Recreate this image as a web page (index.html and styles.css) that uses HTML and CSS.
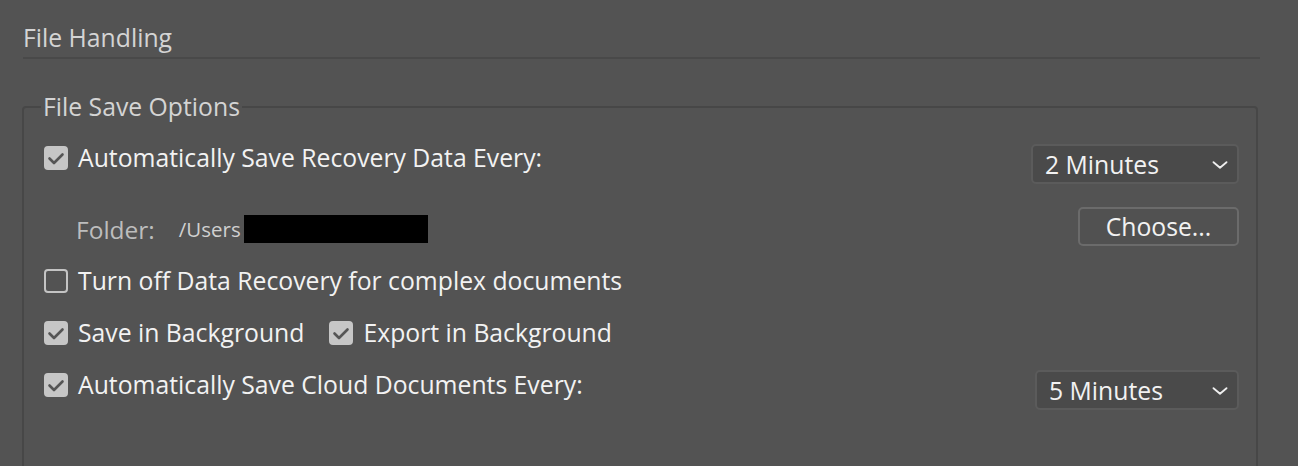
FILE: index.html
```html
<!DOCTYPE html>
<html>
<head>
<meta charset="utf-8">
<link rel="stylesheet" href="styles.css">
</head>
<body>
<div class="window">
  <div class="page">
    <h1 class="section-title">File Handling</h1>
    <fieldset class="group">
      <legend class="group-title">File Save Options</legend>
      <div class="row row-first">
        <label class="check"><span class="box on"><svg viewBox="0 0 24 24" width="24" height="24"><path d="M5.5 12.5 L10 17 L18.5 8.5" fill="none" stroke="#555" stroke-width="2.6" stroke-linecap="round" stroke-linejoin="round"/></svg></span>Automatically Save Recovery Data Every:</label>
        <div class="select select-a"><span>2 Minutes</span><svg class="chev" viewBox="0 0 16 8" width="16" height="8"><path d="M1.5 1.2 L8 6.8 L14.5 1.2" fill="none" stroke="#eee" stroke-width="1.8" stroke-linecap="round" stroke-linejoin="round"/></svg></div>
      </div>
      <div class="row row-folder">
        <div class="folder"><span class="folder-label">Folder:</span><span class="path">/Users</span><span class="redact"></span></div>
        <button class="btn">Choose...</button>
      </div>
      <div class="row row-check">
        <label class="check"><span class="box"></span>Turn off Data Recovery for complex documents</label>
      </div>
      <div class="row row-check">
        <label class="check"><span class="box on"><svg viewBox="0 0 24 24" width="24" height="24"><path d="M5.5 12.5 L10 17 L18.5 8.5" fill="none" stroke="#555" stroke-width="2.6" stroke-linecap="round" stroke-linejoin="round"/></svg></span>Save in Background</label>
        <label class="check check-second"><span class="box on"><svg viewBox="0 0 24 24" width="24" height="24"><path d="M5.5 12.5 L10 17 L18.5 8.5" fill="none" stroke="#555" stroke-width="2.6" stroke-linecap="round" stroke-linejoin="round"/></svg></span>Export in Background</label>
      </div>
      <div class="row row-last">
        <label class="check"><span class="box on"><svg viewBox="0 0 24 24" width="24" height="24"><path d="M5.5 12.5 L10 17 L18.5 8.5" fill="none" stroke="#555" stroke-width="2.6" stroke-linecap="round" stroke-linejoin="round"/></svg></span>Automatically Save Cloud Documents Every:</label>
        <div class="select select-b"><span>5 Minutes</span><svg class="chev" viewBox="0 0 16 8" width="16" height="8"><path d="M1.5 1.2 L8 6.8 L14.5 1.2" fill="none" stroke="#eee" stroke-width="1.8" stroke-linecap="round" stroke-linejoin="round"/></svg></div>
      </div>
    </fieldset>
  </div>
</div>
</body>
</html>
```

FILE: styles.css
```css
html, body {
  margin: 0;
  padding: 0;
  background: #535353;
}
body {
  font-family: "Open Sans", "Noto Sans", sans-serif;
  color: #f0f0f0;
}
.window {
  width: 1298px;
  height: 466px;
  overflow: hidden;
}
.page {
  padding: 24px 38px 0 23px;
}
.section-title {
  margin: 0;
  font-size: 24.75px;
  font-weight: 400;
  line-height: 28px;
  color: #d4d4d4;
  padding-bottom: 5px;
  border-bottom: 2px solid #494949;
}
.group {
  margin: 34px 2px 0 -1px;
  padding: 0 17px 70px 20px;
  border: 2px solid #474747;
  border-radius: 4px;
}
.group-title {
  margin-left: -3px;
  padding: 0 2px;
  font-size: 24.75px;
  line-height: 28px;
  color: #d4d4d4;
}
.row {
  display: flex;
  align-items: flex-start;
}
.row-first {
  margin-top: 23px;
  justify-content: space-between;
}
.row-folder {
  margin-top: 23px;
  justify-content: space-between;
}
.row-check {
  margin-top: 21px;
}
.row-check + .row-check {
  margin-top: 24px;
}
.row-last {
  margin-top: 23px;
  justify-content: space-between;
}
.row-last .check {
  margin-top: 1px;
}
.check {
  display: flex;
  align-items: center;
  font-size: 24.75px;
  line-height: 28px;
  color: #f2f2f2;
  white-space: nowrap;
}
.check-second {
  margin-left: 25px;
}
.box {
  width: 24px;
  height: 24px;
  box-sizing: border-box;
  border: 2px solid #c4c4c4;
  border-radius: 4px;
  margin-right: 10px;
  display: flex;
  align-items: center;
  justify-content: center;
}
.box.on {
  background: #c6c6c6;
  border-color: #c6c6c6;
}
.box svg {
  display: block;
  flex: none;
}
.select {
  height: 40px;
  box-sizing: border-box;
  background: #4a4a4a;
  border: 2px solid #5b5b5b;
  border-radius: 5px;
  display: flex;
  align-items: center;
  justify-content: space-between;
  padding: 1px 9px 0 12px;
  font-size: 24.75px;
  color: #f2f2f2;
}
.select-a { width: 208px; }
.select-b { width: 204px; }
.chev { display: block; }
.folder {
  margin-top: 8px;
  margin-left: 32px;
  display: flex;
  align-items: center;
  height: 28px;
}
.folder-label {
  font-size: 24.5px;
  color: #bdbdbd;
  margin-right: 24px;
}
.path {
  font-size: 20.5px;
  color: #d0d0d0;
  margin-right: 3px;
}
.redact {
  width: 184px;
  height: 28px;
  background: #000;
}
.btn {
  width: 161px;
  height: 39px;
  box-sizing: border-box;
  background: #515151;
  border: 2px solid #6b6b6b;
  border-radius: 5px;
  font-family: "Open Sans", "Noto Sans", sans-serif;
  font-size: 24.75px;
  line-height: 30px;
  color: #f2f2f2;
  padding: 0;
}
```
